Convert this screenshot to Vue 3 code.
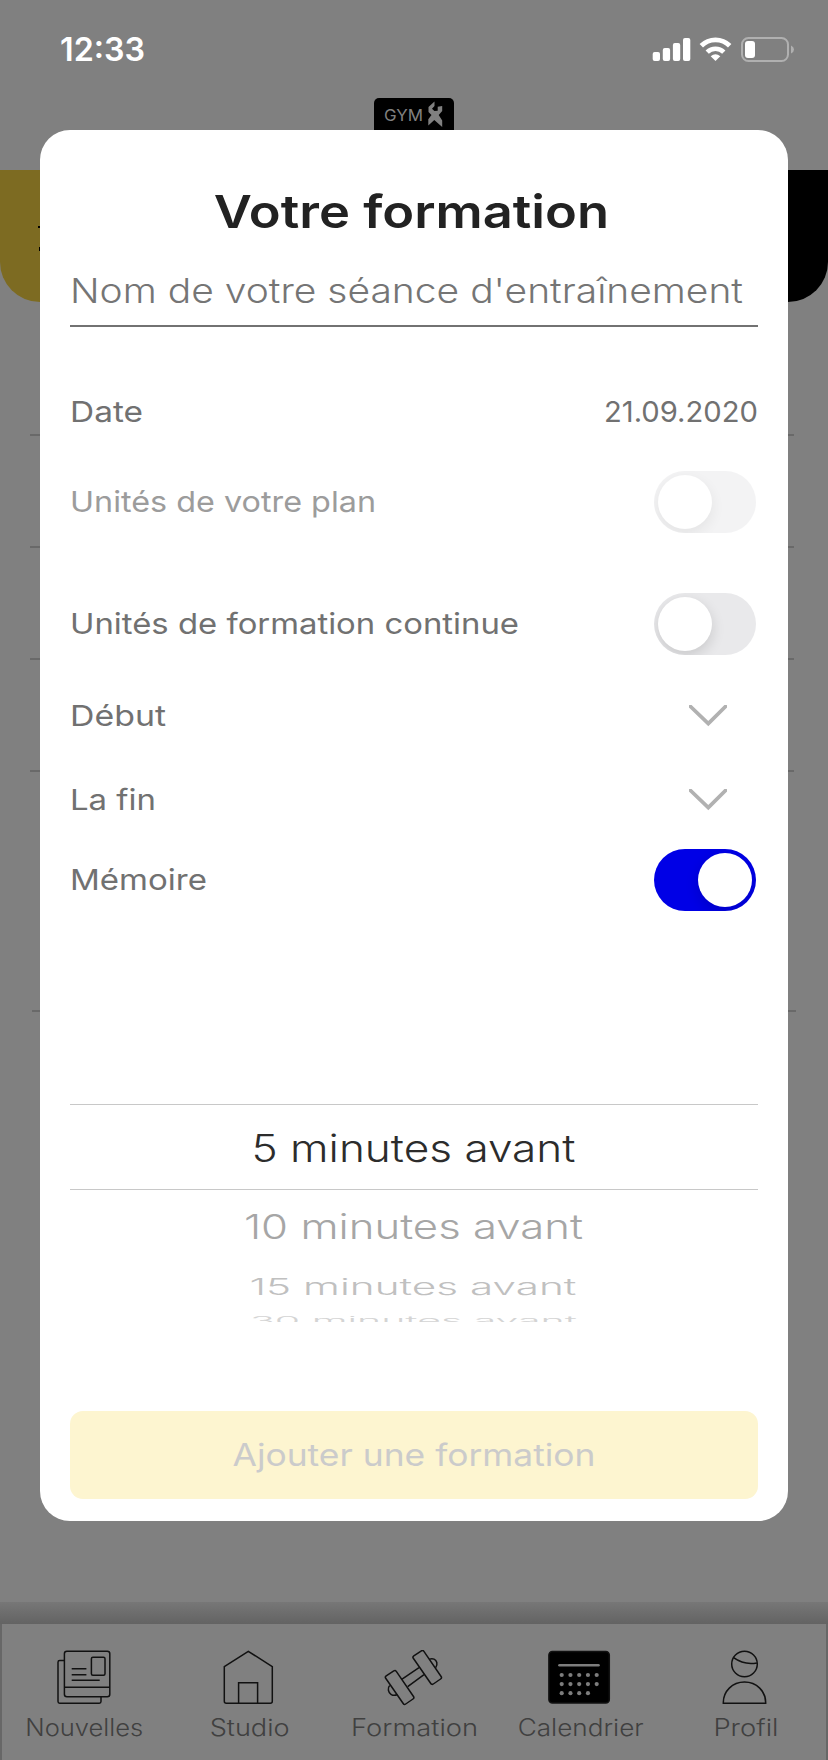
<script setup>
import { ref } from 'vue';

const rows = ref([
  { id: 0, text: 'Date', width: 73, value: '21.09.2020', type: 'value' },
  { id: 1, text: 'Unités de votre plan', width: 306, type: 'toggle', on: false, disabled: true },
  { id: 2, text: 'Unités de formation continue', width: 449, type: 'toggle', on: false },
  { id: 3, text: 'Début', width: 96, type: 'select' },
  { id: 4, text: 'La fin', width: 86, type: 'select' },
  { id: 5, text: 'Mémoire', width: 137, type: 'toggle', on: true },
])

const reminders = [
  { id: 0, text: '5 minutes avant', width: 324, height: 1 },
  { id: 1, text: '10 minutes avant', width: 339, height: 0.91 },
  { id: 2, text: '15 minutes avant', width: 327, height: 0.59 },
  { id: 3, text: '30 minutes avant', width: 327, height: 0.3 },
]

const tabs = [
  { id: 'news', text: 'Nouvelles', width: 118 },
  { id: 'studio', text: 'Studio', width: 80 },
  { id: 'training', text: 'Formation', width: 127 },
  { id: 'calendar', text: 'Calendrier', width: 126 },
  { id: 'profile', text: 'Profil', width: 65 },
]

const dots = []
for (let i = 0; i < 14; i++) {
  dots.push({ x: 14.7 + (i % 5) * 8.75, y: 25 + Math.floor(i / 5) * 9.1 })
}

// stretch a label to its own width
const vFit = {
  mounted(el, { value }) {
    const [width, height = 1] = [].concat(value)
    el.style.transform = `scale(${width / el.getBoundingClientRect().width}, ${height})`
  },
}

const toggle = (row) => {
  if (row.disabled) {
    return
  }
  row.on = !row.on
}
</script>

<template>
  <div class="screen">
    <header class="status">
      <span class="time"><span v-fit="85" class="fit left">12:33</span></span>
      <svg class="status-icons" width="144" height="28" viewBox="0 0 144 28">
        <g fill="#fff">
          <rect x="1.700" y="17" width="7.300" height="9" rx="2" />
          <rect x="11.800" y="13" width="7.300" height="13" rx="2" />
          <rect x="21.900" y="8" width="7.300" height="18" rx="2" />
          <rect x="32" y="3" width="7.300" height="23" rx="2" />
          <path d="M64.500 26l-4.800-4.800q4.800-4 9.600 0z" />
        </g>
        <path d="M50.300 10.800a20 20 0 0 1 28.400 0" fill="none" stroke="#fff" stroke-width="4.800" />
        <path d="M56.200 17.200a11.700 11.700 0 0 1 16.600 0" fill="none" stroke="#fff" stroke-width="4.600" />
        <rect x="91" y="3" width="46" height="23" rx="6.500" fill="none" stroke="#b0b0b0" stroke-width="2" />
        <rect x="94" y="6" width="10" height="17" rx="3" fill="#fff" />
        <path d="M140 10.500q3 1.500 3 4t-3 4z" fill="#b0b0b0" />
      </svg>
    </header>

    <div class="brand">
      <div class="logo">
        <span class="logo-text"><span v-fit="39" class="fit left">GYM</span></span>
        <svg width="15" height="27" viewBox="0 0 15 27">
          <path fill="#808080" d="M6.500.5L.5 6v5l3 3L.3 18.300v6.200l6-5.500 7.900 7v-6.500l-3.500-5.500 3.500-4V5l-4.500.8v4l-3.300.2-2.400-2.200 2.500-2.800z" />
        </svg>
      </div>
    </div>

    <div class="bands">
      <div class="band yellow">
        <svg width="3" height="26" viewBox="0 0 3 26">
          <path d="M0 1h2v2H0zM1 22h2v4H1z" />
        </svg>
      </div>
      <div class="band black"></div>
    </div>

    <div class="list">
      <div v-for="n in 4" :key="n" class="list-item"></div>
      <div class="list-item last"></div>
    </div>

    <div class="tab-shadow"></div>
    <nav class="tabs">
      <a v-for="tab in tabs" :key="tab.id" class="tab">
        <svg class="tab-icon" width="66" height="56" viewBox="0 0 66 56">
          <template v-if="tab.id === 'news'">
            <g transform="translate(0.700 0)">
              <rect x="13.700" y="1.300" width="45.400" height="45.400" rx="2.500" />
              <path d="M13.700 10.500H9q-1.700 0-1.700 1.700v39.400q0 1.700 1.700 1.700h39.600q1.700 0 1.700-1.700v-4.900M13.700 37.300h45.600" />
              <rect x="40.700" y="7.300" width="13.600" height="18" rx="1.500" />
              <path d="M21 18.700h14.700M21 24.700h14.700M21 30.200h28" />
            </g>
          </template>
          <template v-else-if="tab.id === 'studio'">
            <path d="M9.300 16.700l24-15.400 24 15.400v34.600q0 2-2 2h-44q-2 0-2-2zM23.600 53.300V32.700h19v20.600" />
          </template>
          <template v-else-if="tab.id === 'training'">
            <path stroke-linejoin="round" d="M5.200 25.800l7.600-5q1.500-1 2.500.5l17.200 25.200q1 1.500-.5 2.500l-7.300 5q-1.500 1-2.500-.5L4.700 28.300q-1-1.500.5-2.500zM32.800 5.800l7.600-5q1.500-1 2.500.5l17.200 25.200q1 1.500-.5 2.500l-7.300 5q-1.500 1-2.500-.5L32.300 8.300q-1-1.500.5-2.500z" />
            <path d="M20.700 29.300L38 17.700M26.700 36.700L43 24.700M8.700 35.500c-2.500 2.500-1.500 7 1.300 8.800 2 1.300 4.500 1.200 6.300.2M48.600 9.200c3-1.500 6.400.3 7.200 3.300.5 2-.1 3.800-1.200 5.200" />
          </template>
          <template v-else-if="tab.id === 'calendar'">
            <rect x="1.900" y="1.500" width="60.400" height="51.500" rx="3.500" fill="#000" />
            <path stroke="#7d7d7d" stroke-width="2.600" stroke-linecap="round" d="M12.500 15.200h39" />
            <circle v-for="(dot, index) in dots" :key="index" :cx="dot.x" :cy="dot.y" r="2.100" fill="#7d7d7d" stroke="none" />
          </template>
          <template v-else>
            <circle cx="32.500" cy="14" r="12.800" />
            <path d="M21.600 7.700q10.500 7.600 23.300 5.200M11.300 53.300c-.3-12 9.200-21.300 21.200-21.300s21.500 9.300 21.200 21.300z" />
          </template>
        </svg>
        <span class="tab-text"><span v-fit="tab.width" class="fit">{{ tab.text }}</span></span>
      </a>
    </nav>

    <div class="modal">
      <h2 class="title"><span v-fit="393" class="fit">Votre formation</span></h2>
      <div class="name-field"><span v-fit="673" class="fit left">Nom de votre séance d'entraînement</span></div>

      <div v-for="row in rows" :key="row.id" class="row" :class="['row-' + row.id, { disabled: row.disabled }]">
        <span v-fit="row.width" class="fit left label">{{ row.text }}</span>
        <span v-if="row.type === 'value'" v-fit="154" class="fit right">{{ row.value }}</span>
        <button v-else-if="row.type === 'toggle'" class="toggle" :class="{ on: row.on }" @click="toggle(row)">
          <i class="knob"></i>
        </button>
        <svg v-else class="chevron" width="38" height="22" viewBox="0 0 38 22">
          <path d="M1.500 1.500L19.300 18.700 36.500 1.500" fill="none" stroke="#b1b1b1" stroke-width="3.800" stroke-linecap="round" />
        </svg>
      </div>

      <div class="picker">
        <div v-for="item in reminders" :key="item.id" class="option" :class="'option-' + item.id">
          <span v-fit="[item.width, item.height]" class="fit">{{ item.text }}</span>
        </div>
      </div>

      <button class="submit"><span v-fit="363" class="fit">Ajouter une formation</span></button>
    </div>
  </div>
</template>

<style>
body {
  margin: 0;
  background: #808080;
}
</style>

<style scoped>
.screen {
  position: relative;
  display: flex;
  flex-direction: column;
  width: 828px;
  height: 1760px;
  overflow: hidden;
  background: #808080;
  font-family: Inter, 'Liberation Sans', sans-serif;
}

.fit {
  display: inline-block;
  white-space: nowrap;
}

.left {
  transform-origin: left center;
}

.right {
  transform-origin: right center;
}

.status {
  display: flex;
  justify-content: space-between;
  align-items: center;
  height: 98px;
  padding: 0 33px 0 60px;
  box-sizing: border-box;
}

.time {
  color: #fff;
  font-size: 32px;
  font-weight: 560;
  line-height: 40px;
  padding-top: 1px;
}

.brand {
  display: flex;
  justify-content: center;
  height: 72px;
}

.logo {
  display: flex;
  width: 80px;
  height: 50px;
  padding: 3px 11px 0 10px;
  box-sizing: border-box;
  justify-content: space-between;
  border-radius: 5px;
  background: #000;
}

.logo-text {
  width: 40px;
  color: #808080;
  font-size: 16px;
  font-weight: 400;
  line-height: 28px;
}

.bands {
  display: flex;
  height: 132px;
}

.band {
  width: 50%;
}

.yellow {
  background: #7d6b22;
  border-radius: 0 0 40px 40px;
}

.yellow svg {
  display: block;
  margin: 55px 0 0 38px;
}

.black {
  background: #000;
  border-radius: 0 0 40px 40px;
}

.list {
  height: 1300px;
  padding-top: 22px;
  box-sizing: border-box;
}

.list-item {
  height: 112px;
  margin: 0 34px 0 30px;
  border-bottom: 2px solid #696969;
  box-sizing: border-box;
}

.list-item.last {
  height: 240px;
  margin: 0 32px;
}

.tab-shadow {
  flex: none;
  height: 22px;
  background: linear-gradient(#777, #636363);
}

.tabs {
  display: flex;
  flex: none;
  height: 136px;
  box-sizing: border-box;
  box-shadow: inset 2px 0 #676767, inset -2px 0 #676767;
}

.tab {
  display: flex;
  flex: 1 1 0;
  flex-direction: column;
  align-items: center;
  padding-top: 26px;
}

.tab-icon {
  flex: none;
  fill: none;
  stroke: #111;
  stroke-width: 1.5;
}

.tab-text {
  padding-left: 2px;
  color: #404040;
  font-size: 23.500px;
  font-weight: 320;
  line-height: 43px;
}

.modal {
  position: absolute;
  top: 130px;
  left: 40px;
  width: 748px;
  height: 1391px;
  padding: 52px 30px 0;
  box-sizing: border-box;
  border-radius: 30px;
  background: #fff;
}

.title {
  margin: 0;
  color: #222;
  font-size: 45.500px;
  font-weight: 560;
  line-height: 60px;
  text-align: center;
  text-indent: -2px;
}

.name-field {
  height: 85px;
  margin-bottom: 59px;
  padding-top: 14px;
  box-sizing: border-box;
  border-bottom: 2px solid #727272;
  color: #757575;
  font-size: 34px;
  font-weight: 300;
  line-height: 69px;
}

.row {
  display: flex;
  justify-content: space-between;
  align-items: center;
  color: #717171;
  font-size: 29px;
  font-weight: 430;
}

.row .fit {
  margin-bottom: 2px;
}

.row-0 {
  height: 52px;
}

.row-1 {
  height: 128px;
}

.row-2 {
  height: 116px;
}

.row-3 {
  height: 67px;
}

.row-4 {
  height: 100px;
}

.row-3 .fit,
.row-4 .fit {
  margin-bottom: 0;
}

.row-5 {
  height: 62px;
}

.disabled .label {
  color: #9c9c9c;
}

.disabled .toggle {
  opacity: 0.5;
}

.toggle {
  display: flex;
  width: 102px;
  height: 62px;
  margin-right: 2px;
  padding: 4px;
  overflow: hidden;
  border: none;
  border-radius: 31px;
  background: #e9e9eb;
}

.knob {
  width: 54px;
  height: 54px;
  border-radius: 50%;
  background: #fff;
  box-shadow: 0 5px 14px rgba(0, 0, 0, 0.14);
}

.toggle.on {
  justify-content: flex-end;
  background: #0000e6;
}

.chevron {
  margin-right: 31px;
}

.row-4 .chevron {
  margin-top: 2px;
}

.picker {
  height: 411px;
  margin-top: 193px;
  margin-bottom: -104px;
  font-size: 38px;
  font-weight: 330;
  text-align: center;
}

.option {
  box-sizing: border-box;
}

.option .fit {
  margin-left: -2px;
}

.option-0 {
  height: 86px;
  border-top: 1px solid #c8c8c8;
  border-bottom: 1px solid #c8c8c8;
  color: #2c2c2c;
  line-height: 86px;
}

.option-1 {
  height: 72px;
  color: #a6a6a6;
  line-height: 72px;
}

.option-2 {
  height: 50px;
  color: #c0c0c0;
  line-height: 50px;
}

.option-3 {
  height: 10px;
  overflow: hidden;
  color: #d4d4d4;
  line-height: 18px;
}

.submit {
  display: block;
  width: 100%;
  height: 88px;
  padding: 0;
  border: none;
  border-radius: 13px;
  background: #fdf5d0;
  color: #cbcbcb;
  font-family: inherit;
  font-size: 31px;
  font-weight: 430;
  line-height: 88px;
}
</style>
